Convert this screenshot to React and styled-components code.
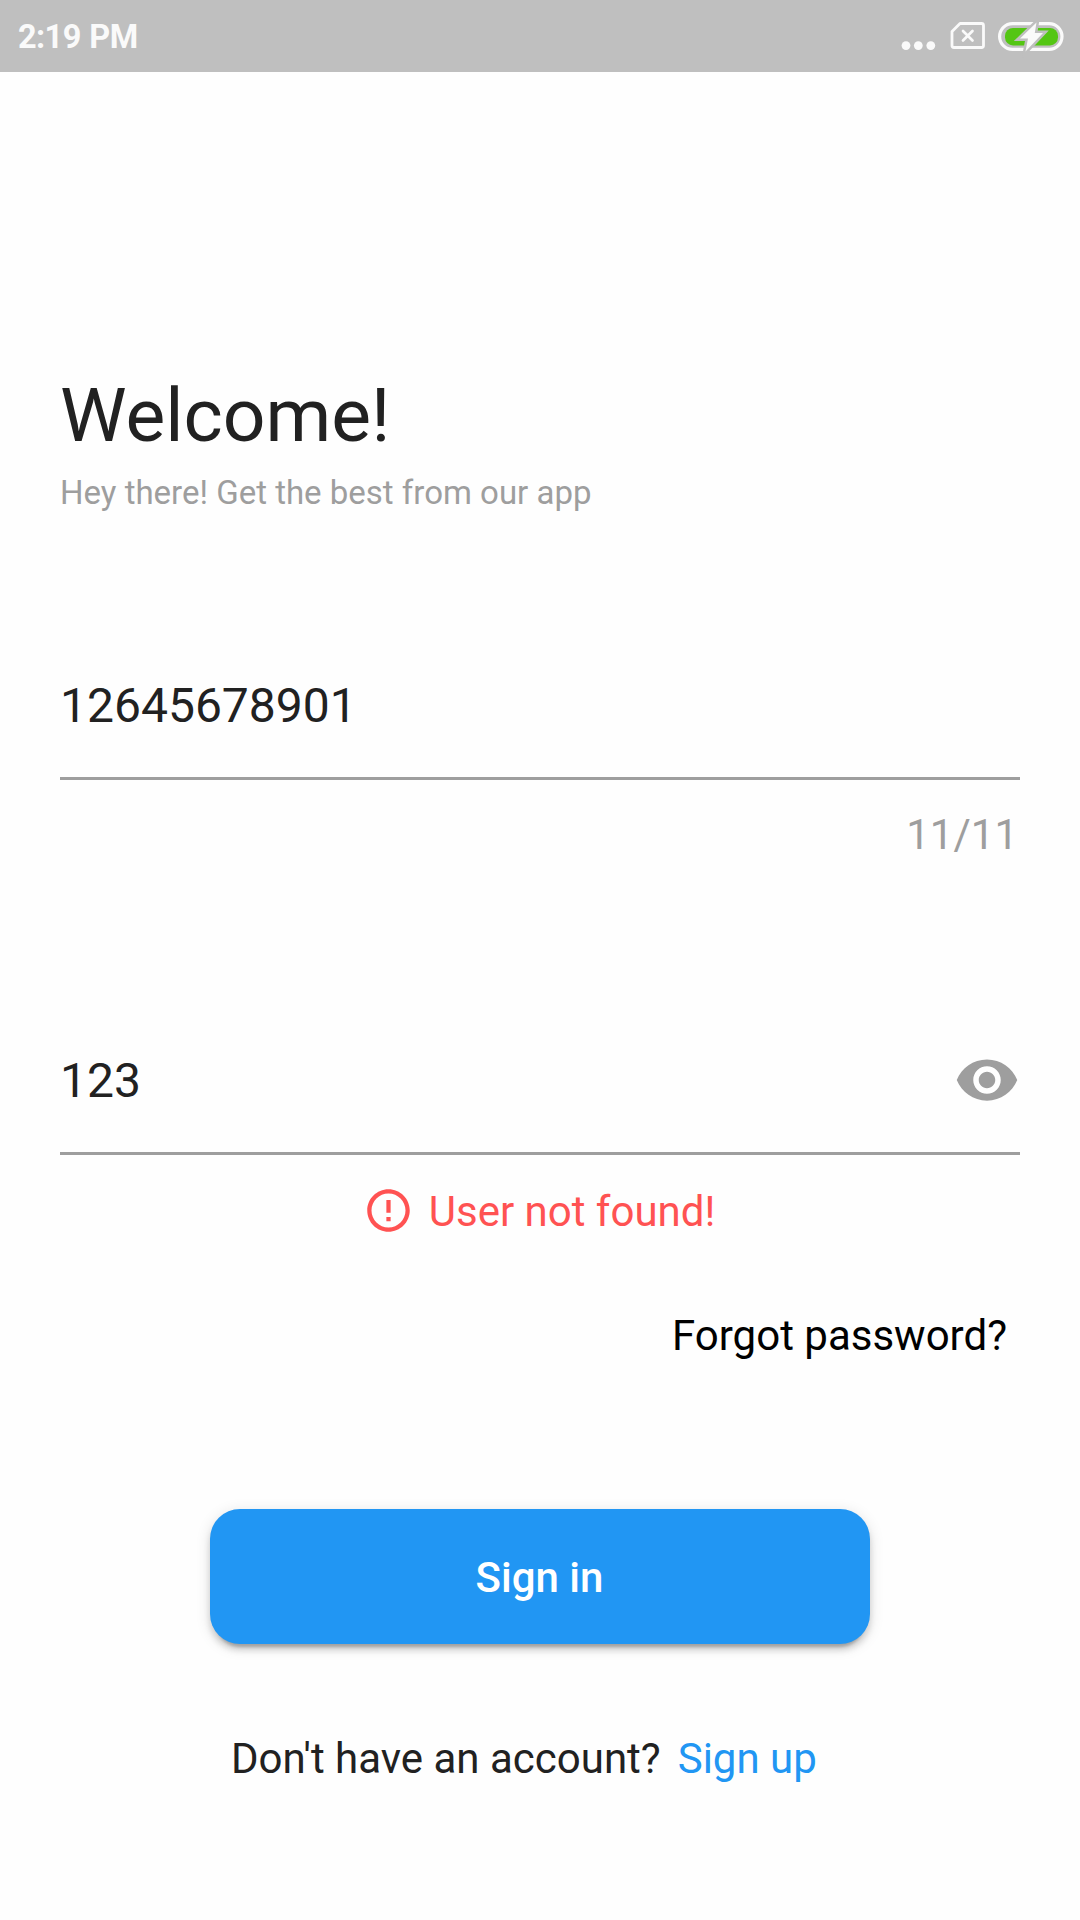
import React, { useState } from "react";
import styled, { createGlobalStyle } from "styled-components";

const GlobalStyle = createGlobalStyle`
  *, *::before, *::after { box-sizing: border-box; }
  body {
    margin: 0;
    background: #fefefe;
    font-family: Roboto, "Liberation Sans", sans-serif;
    color: #212121;
  }
`;

const Screen = styled.div`
  width: 1080px;
  height: 1920px;
  display: flex;
  flex-direction: column;
  overflow: hidden;
`;

const StatusBar = styled.header`
  flex: none;
  height: 72px;
  display: flex;
  align-items: center;
  justify-content: space-between;
  padding: 0 16px 0 18px;
  background: #bfbfbf;
  color: #fafafa;
`;

const Clock = styled.span`
  padding-top: 3px;
  font-size: 32.5px;
  line-height: 39px;
  font-weight: 700;
  letter-spacing: -0.6px;
  word-spacing: 1.2px;
`;

const StatusIcons = styled.svg`
  display: block;
  width: 164px;
  height: 72px;
`;

const Content = styled.main`
  flex: 1;
  display: flex;
  flex-direction: column;
  padding: 299px 60px 0;
`;

const Title = styled.h1`
  margin: 0;
  font-size: 75px;
  line-height: 88px;
  font-weight: 400;
`;

const Subtitle = styled.p`
  margin: 14px 0 0;
  font-size: 33px;
  line-height: 39px;
  color: #9e9e9e;
`;

const Field = styled.label`
  display: flex;
  align-items: center;
  height: 108px;
  margin-top: ${(p) => p.$gap}px;
  border-bottom: 3px solid #9e9e9e;
  padding-bottom: 39px;
`;

const Input = styled.input`
  flex: 1;
  min-width: 0;
  height: 58px;
  padding: 1px 0 0;
  border: 0;
  outline: 0;
  background: transparent;
  font: 400 48px/57px Roboto, "Liberation Sans", sans-serif;
  color: inherit;
`;

const Toggle = styled.button`
  display: flex;
  padding: 0;
  border: 0;
  background: none;
  color: #9e9e9e;
`;

const Icon = styled.svg`
  display: block;
  width: ${(p) => p.$size}px;
  height: ${(p) => p.$size}px;
  fill: currentColor;
`;

const BodyText = styled.span`
  font-size: 42px;
  line-height: 49px;
`;

const Counter = styled(BodyText)`
  align-self: flex-end;
  margin: 30px 2px 0 0;
  color: #9e9e9e;
`;

const ErrorRow = styled.div`
  display: flex;
  align-items: center;
  justify-content: center;
  gap: 15px;
  height: 51px;
  margin-top: 30px;
  padding-right: 2px;
  color: #ff5252;
`;

const ErrorText = styled(BodyText)`
  padding-top: 2px;
`;

const Forgot = styled.a`
  align-self: flex-end;
  display: flex;
  margin: 75px 13px 0 0;
  color: #000;
`;

const SignIn = styled.button`
  align-self: center;
  flex: none;
  width: 660px;
  height: 135px;
  margin-top: 149px;
  padding: 2px 1px 0 0;
  border: 0;
  border-radius: 30px;
  background: #2196f3;
  box-shadow: 0 9px 3px -6px rgba(0, 0, 0, 0.2), 0 6px 6px rgba(0, 0, 0, 0.14),
    0 3px 15px rgba(0, 0, 0, 0.12);
  color: #fff;
  font: 500 42px/49px Roboto, "Liberation Sans", sans-serif;
`;

const Footer = styled.div`
  display: flex;
  align-items: center;
  gap: 17px;
  margin: 90px 0 0 171px;
`;

const Link = styled.a`
  display: flex;
  color: #2196f3;
`;

export default function App() {
  const [phone, setPhone] = useState("12645678901");
  const [password, setPassword] = useState("123");
  const [visible, setVisible] = useState(true);

  return (
    <>
      <GlobalStyle />
      <Screen>
        <StatusBar>
          <Clock>2:19 PM</Clock>
          <StatusIcons viewBox="900 0 164 72" aria-hidden="true">
            <g fill="#fafafa">
              <circle cx="906" cy="45.6" r="4.4" />
              <circle cx="918.3" cy="45.6" r="4.4" />
              <circle cx="930.8" cy="45.6" r="4.4" />
            </g>
            <path
              d="M960 23.5H981.5Q983.5 23.5 983.5 25.5V45.5Q983.5 47.5 981.5 47.5H954Q952 47.5 952 45.5V31.5Z"
              fill="none"
              stroke="#fafafa"
              strokeWidth="2.8"
              strokeLinejoin="round"
            />
            <path d="M963 31L972.5 40.5M972.5 31L963 40.5" stroke="#fafafa" strokeWidth="2.7" strokeLinecap="round" />
            <rect x="999.6" y="23.6" width="62.4" height="25.8" rx="12.9" fill="none" stroke="#fafafa" strokeWidth="3.2" />
            <rect x="1005" y="28" width="53" height="17.4" rx="8" fill="#54c613" />
            <path
              d="M1036.5 22.5L1020 38.5H1028L1025.5 51.5L1043 33H1034.8Z"
              fill="#bfbfbf"
              stroke="#bfbfbf"
              strokeWidth="5"
            />
            <path d="M1036.5 22.5L1020 38.5H1028L1025.5 51.5L1043 33H1034.8Z" fill="#fafafa" />
          </StatusIcons>
        </StatusBar>
        <Content>
          <Title>Welcome!</Title>
          <Subtitle>Hey there! Get the best from our app</Subtitle>

          <Field $gap={160}>
            <Input value={phone} maxLength={11} onChange={(e) => setPhone(e.target.value)} />
          </Field>
          <Counter>{phone.length}/11</Counter>

          <Field $gap={188}>
            <Input
              type={visible ? "text" : "password"}
              value={password}
              onChange={(e) => setPassword(e.target.value)}
            />
            <Toggle type="button" aria-label="Toggle password" onClick={() => setVisible(!visible)}>
              <Icon $size={66} viewBox="0 0 24 24">
                <path d="M12 4.5C7 4.5 2.73 7.61 1 12c1.73 4.39 6 7.5 11 7.5s9.27-3.11 11-7.5c-1.73-4.39-6-7.5-11-7.5zM12 17c-2.76 0-5-2.24-5-5s2.24-5 5-5 5 2.24 5 5-2.24 5-5 5zm0-8c-1.66 0-3 1.34-3 3s1.34 3 3 3 3-1.34 3-3-1.34-3-3-3z" />
              </Icon>
            </Toggle>
          </Field>

          <ErrorRow>
            <Icon $size={51} viewBox="0 0 24 24">
              <path d="M11 15h2v2h-2zm0-8h2v6h-2zm.99-5C6.47 2 2 6.48 2 12s4.47 10 9.99 10C17.52 22 22 17.52 22 12S17.52 2 11.99 2zM12 20c-4.42 0-8-3.58-8-8s3.58-8 8-8 8 3.58 8 8-3.58 8-8 8z" />
            </Icon>
            <ErrorText>User not found!</ErrorText>
          </ErrorRow>

          <Forgot>
            <BodyText>Forgot password?</BodyText>
          </Forgot>

          <SignIn type="button">Sign in</SignIn>

          <Footer>
            <BodyText>Don't have an account?</BodyText>
            <Link>
              <BodyText>Sign up</BodyText>
            </Link>
          </Footer>
        </Content>
      </Screen>
    </>
  );
}
